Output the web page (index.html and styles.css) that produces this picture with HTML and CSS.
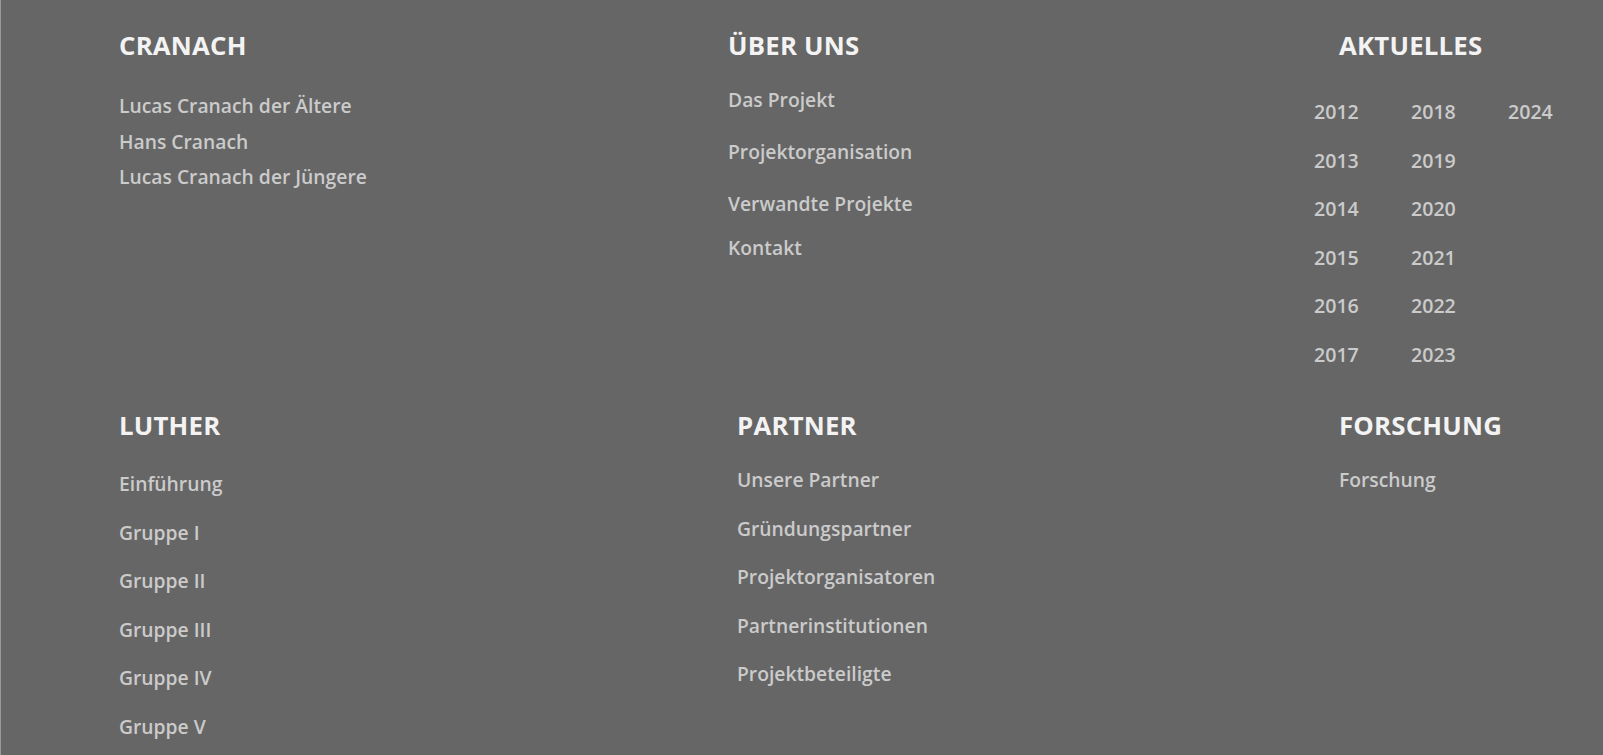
FILE: index.html
```html
<!DOCTYPE html>
<html lang="de">
<head>
<meta charset="utf-8">
<title>Footer</title>
<link rel="stylesheet" href="styles.css">
</head>
<body>
<footer class="footer">
  <div class="row row-top">
    <section class="col col-cranach">
      <h2 class="heading">CRANACH</h2>
      <ul class="links links-tight">
        <li><a href="#">Lucas Cranach der Ältere</a></li>
        <li><a href="#">Hans Cranach</a></li>
        <li><a href="#">Lucas Cranach der Jüngere</a></li>
      </ul>
    </section>
    <section class="col col-ueber">
      <h2 class="heading">ÜBER UNS</h2>
      <ul class="links links-ueber">
        <li class="u1"><a href="#">Das Projekt</a></li>
        <li class="u2"><a href="#">Projektorganisation</a></li>
        <li class="u3"><a href="#">Verwandte Projekte</a></li>
        <li class="u4"><a href="#">Kontakt</a></li>
      </ul>
    </section>
    <section class="col col-aktuelles">
      <h2 class="heading">AKTUELLES</h2>
      <ul class="years">
        <li><a href="#">2012</a></li>
        <li><a href="#">2013</a></li>
        <li><a href="#">2014</a></li>
        <li><a href="#">2015</a></li>
        <li><a href="#">2016</a></li>
        <li><a href="#">2017</a></li>
        <li><a href="#">2018</a></li>
        <li><a href="#">2019</a></li>
        <li><a href="#">2020</a></li>
        <li><a href="#">2021</a></li>
        <li><a href="#">2022</a></li>
        <li><a href="#">2023</a></li>
        <li><a href="#">2024</a></li>
      </ul>
    </section>
  </div>
  <div class="row row-bottom">
    <section class="col col-luther">
      <h2 class="heading">LUTHER</h2>
      <ul class="links links-wide links-luther">
        <li><a href="#">Einführung</a></li>
        <li><a href="#">Gruppe I</a></li>
        <li><a href="#">Gruppe II</a></li>
        <li><a href="#">Gruppe III</a></li>
        <li><a href="#">Gruppe IV</a></li>
        <li><a href="#">Gruppe V</a></li>
      </ul>
    </section>
    <section class="col col-partner">
      <h2 class="heading">PARTNER</h2>
      <ul class="links links-wide">
        <li><a href="#">Unsere Partner</a></li>
        <li><a href="#">Gründungspartner</a></li>
        <li><a href="#">Projektorganisatoren</a></li>
        <li><a href="#">Partnerinstitutionen</a></li>
        <li><a href="#">Projektbeteiligte</a></li>
      </ul>
    </section>
    <section class="col col-forschung">
      <h2 class="heading">FORSCHUNG</h2>
      <ul class="links links-wide">
        <li><a href="#">Forschung</a></li>
      </ul>
    </section>
  </div>
</footer>
</body>
</html>
```

FILE: styles.css
```css
* { box-sizing: border-box; }

html, body {
  margin: 0;
  padding: 0;
  background: #666666;
}

body {
  font-family: "Open Sans", "Noto Sans", "Liberation Sans", sans-serif;
  height: 755px;
  overflow: hidden;
  border-left: 1px solid #9a9a9a;
}

.footer {
  padding-left: 118px;
}

.row {
  display: grid;
  grid-template-columns: 609px 611px 1fr;
}

.row-top {
  padding-top: 29px;
  height: 409px;
}

.row-bottom .col-partner {
  padding-left: 9px;
}

ul {
  list-style: none;
  margin: 0;
  padding: 0;
}

a {
  color: #cbcbcb;
  text-decoration: none;
}

.heading {
  margin: 0;
  font-size: 25.8px;
  line-height: 32px;
  font-weight: 700;
  color: #f3f3f3;
  letter-spacing: 0.2px;
}

.links {
  font-size: 19.3px;
  font-weight: 600;
}

.links-tight {
  margin-top: 27px;
}
.links-tight li {
  line-height: 35.5px;
}

.links-ueber {
  margin-top: 24px;
}
.links-ueber li { line-height: 30px; }
.links-ueber .u2 { margin-top: 22px; }
.links-ueber .u3 { margin-top: 22px; }
.links-ueber .u4 { margin-top: 14px; }

.links-wide {
  margin-top: 15px;
}
.links-wide li {
  line-height: 48.5px;
}
.links-luther {
  margin-top: 19px;
}

.years {
  margin-top: 36px;
  margin-left: -25px;
  display: grid;
  grid-template-columns: repeat(3, 97px);
  grid-template-rows: repeat(6, 48.5px);
  grid-auto-flow: column;
  font-size: 19.6px;
  font-weight: 600;
}
.years li {
  line-height: 30px;
}
```
